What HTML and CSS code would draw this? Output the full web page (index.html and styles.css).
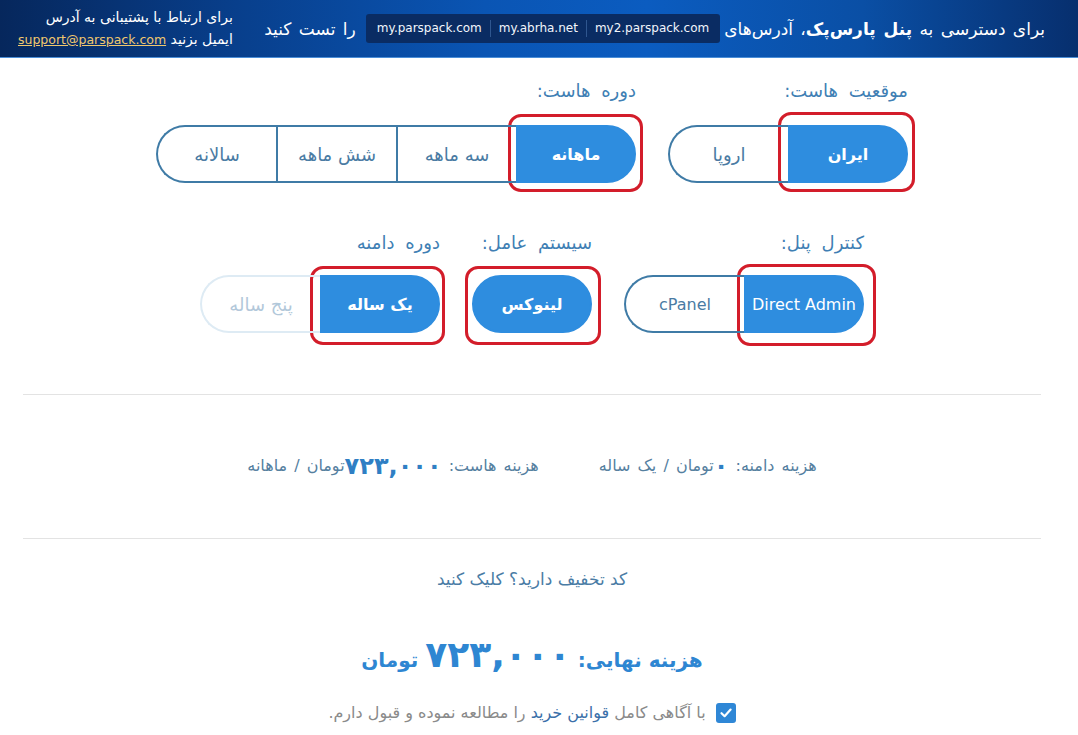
FILE: index.html
```html
<!DOCTYPE html>
<html lang="fa" dir="rtl">
<head>
<meta charset="utf-8">
<title>سفارش هاست</title>
<link rel="stylesheet" href="styles.css">
</head>
<body>
<header class="topbar">
  <div class="topbar-main">
    <span class="intro">برای دسترسی به <b>پنل پارس‌پک</b>، آدرس‌های</span>
    <div class="domains">
      <span class="domain">my2.parspack.com</span>
      <span class="domain">my.abrha.net</span>
      <span class="domain">my.parspack.com</span>
    </div>
    <span class="intro">را تست کنید</span>
  </div>
  <div class="support">
    <div>برای ارتباط با پشتیبانی به آدرس</div>
    <div>ایمیل بزنید <a class="email" href="#">support@parspack.com</a></div>
  </div>
</header>

<main class="content">
  <section class="options-row row-first">
    <div class="option">
      <div class="option-label">موقعیت هاست:</div>
      <div class="segmented">
        <span class="seg active mark mark-loc">ایران</span>
        <span class="seg">اروپا</span>
      </div>
    </div>
    <div class="option">
      <div class="option-label">دوره هاست:</div>
      <div class="segmented">
        <span class="seg active mark mark-period">ماهانه</span>
        <span class="seg">سه ماهه</span>
        <span class="seg">شش ماهه</span>
        <span class="seg">سالانه</span>
      </div>
    </div>
  </section>

  <section class="options-row row-second">
    <div class="option">
      <div class="option-label">کنترل پنل:</div>
      <div class="segmented">
        <span class="seg active latin mark mark-panel">Direct Admin</span>
        <span class="seg latin">cPanel</span>
      </div>
    </div>
    <div class="option">
      <div class="option-label">سیستم عامل:</div>
      <div class="segmented">
        <span class="seg active mark mark-os">لینوکس</span>
      </div>
    </div>
    <div class="option">
      <div class="option-label">دوره دامنه</div>
      <div class="segmented">
        <span class="seg active mark mark-domain">یک ساله</span>
        <span class="seg disabled">پنج ساله</span>
      </div>
    </div>
  </section>

  <hr class="divider">

  <section class="prices">
    <div class="price">هزینه دامنه:&nbsp; <span class="price-num">۰</span>تومان / یک ساله</div>
    <div class="price">هزینه هاست:&nbsp; <span class="price-num">۷۲۳,۰۰۰</span>تومان / ماهانه</div>
  </section>

  <hr class="divider">

  <div class="discount">کد تخفیف دارید؟ کلیک کنید</div>

  <div class="total">هزینه نهایی: <span class="total-num">۷۲۳,۰۰۰</span> تومان</div>

  <label class="agree">
    <span class="checkbox">
      <svg width="14" height="14" viewBox="0 0 14 14"><path d="M2.5 7.2 L5.6 10.2 L11.6 3.6" fill="none" stroke="#fff" stroke-width="2.2" stroke-linecap="round" stroke-linejoin="round"/></svg>
    </span>
    <span class="agree-text">با آگاهی کامل <a class="rules" href="#">قوانین خرید</a> را مطالعه نموده و قبول دارم.</span>
  </label>
</main>
</body>
</html>
```

FILE: styles.css
```css
* { box-sizing: border-box; }

html, body {
  margin: 0;
  padding: 0;
  background: #ffffff;
}

body {
  font-family: "DejaVu Sans", "Noto Sans", sans-serif;
  direction: rtl;
  color: #4a7ba3;
}

/* ---------- top bar ---------- */
.topbar {
  height: 58px;
  display: flex;
  align-items: center;
  justify-content: space-between;
  padding: 0 33px 0 18px;
  background: linear-gradient(to right, #06275c 0%, #083f8c 22%, #0a55b4 45%, #0b5cc0 60%, #0a4fa5 80%, #072f6e 100%);
  border-bottom: 1px solid #4a8ed8;
  color: #ffffff;
}

.topbar-main {
  display: flex;
  align-items: center;
  gap: 4px;
  flex-shrink: 0;
}

.intro {
  font-size: 17px;
  word-spacing: 2px;
  white-space: nowrap;
}

.intro b { font-weight: bold; }

.domains {
  display: flex;
  align-items: center;
  height: 29px;
  padding: 0 3px;
  margin: 0 0 0 6px;
  background: #0a2c63;
  border-radius: 3px;
  direction: rtl;
}

.domain {
  direction: ltr;
  font-size: 12px;
  padding: 0 8px;
  line-height: 17px;
  color: #f2f6fc;
}

.domain + .domain {
  border-right: 1px solid #2f568f;
}

.support {
  font-size: 14px;
  line-height: 22px;
  white-space: nowrap;
  flex-shrink: 0;
}

.email {
  font-size: 12.5px;
  color: #f0c86e;
  text-decoration: underline;
}

/* ---------- content ---------- */
.content {
  margin: 0 37px 0 23px;
  padding-top: 23px;
}

.options-row {
  display: flex;
  justify-content: center;
  gap: 32px;
}

.row-second {
  margin-top: 50px;
}

.option-label {
  font-size: 18px;
  word-spacing: 5px;
  line-height: 20px;
  height: 20px;
  color: #3f7fb4;
  margin-bottom: 24px;
  white-space: nowrap;
}

.row-second .option-label {
  margin-bottom: 22px;
}

.segmented {
  display: flex;
}

.seg {
  position: relative;
  width: 120px;
  height: 58px;
  display: flex;
  align-items: center;
  justify-content: center;
  font-size: 18px;
  color: #4a7ba3;
  border: 2px solid #3f7ba6;
  border-right-width: 0;
  white-space: nowrap;
}

.seg:first-child {
  border-right-width: 2px;
  border-top-right-radius: 29px;
  border-bottom-right-radius: 29px;
}

.seg:last-child {
  border-top-left-radius: 29px;
  border-bottom-left-radius: 29px;
}

.seg.active {
  background: #2e8ddf;
  border-color: #2e8ddf;
  color: #ffffff;
  font-weight: bold;
  font-size: 16px;
}

.seg.latin {
  font-size: 16px;
}

.seg.latin.active {
  font-weight: normal;
}

.seg.disabled {
  border-color: #deebf4;
  color: #b2c8da;
}

/* red annotation outline */
.mark::after {
  content: "";
  position: absolute;
  border: 3px solid #d31d2a;
  border-radius: 13px;
  pointer-events: none;
}

.mark-loc::after { top: -15px; right: -9px; bottom: -11px; left: -12px; }
.mark-period::after { top: -13px; right: -9px; bottom: -11px; left: -10px; }
.mark-panel::after { top: -13px; right: -14px; bottom: -15px; left: -9px; }
.mark-os::after { top: -11px; right: -11px; bottom: -14px; left: -9px; }
.mark-domain::after { top: -11px; right: -7px; bottom: -14px; left: -12px; }

/* ---------- prices ---------- */
.divider {
  border: 0;
  height: 1px;
  background: #e3e3e3;
  margin: 0;
}

.row-second + .divider {
  margin-top: 61px;
}

.prices {
  display: flex;
  justify-content: center;
  gap: 60px;
  padding: 56px 0 57px;
}

.price {
  font-size: 16px;
  word-spacing: 2px;
  line-height: 30px;
  height: 30px;
  color: #55809f;
  white-space: nowrap;
  display: flex;
  align-items: center;
}

.price-num {
  font-size: 24px;
  font-weight: bold;
  color: #2f7fc4;
  word-spacing: 0;
}

.discount {
  margin-top: 28px;
  text-align: center;
  font-size: 17px;
  line-height: 24px;
  color: #4a7ca5;
}

.total {
  margin-top: 39px;
  text-align: center;
  font-size: 20px;
  line-height: 50px;
  height: 50px;
  font-weight: bold;
  color: #2e86d2;
}

.total-num {
  font-size: 36px;
}

.agree {
  margin-top: 22px;
  display: flex;
  justify-content: center;
  align-items: center;
  gap: 10px;
}

.checkbox {
  width: 20px;
  height: 20px;
  border-radius: 3px;
  background: #2f87d6;
  display: flex;
  align-items: center;
  justify-content: center;
}

.agree-text {
  font-size: 16px;
  line-height: 22px;
  color: #8a8a8a;
}

.rules {
  color: #3a6fa9;
  text-decoration: none;
}
```
